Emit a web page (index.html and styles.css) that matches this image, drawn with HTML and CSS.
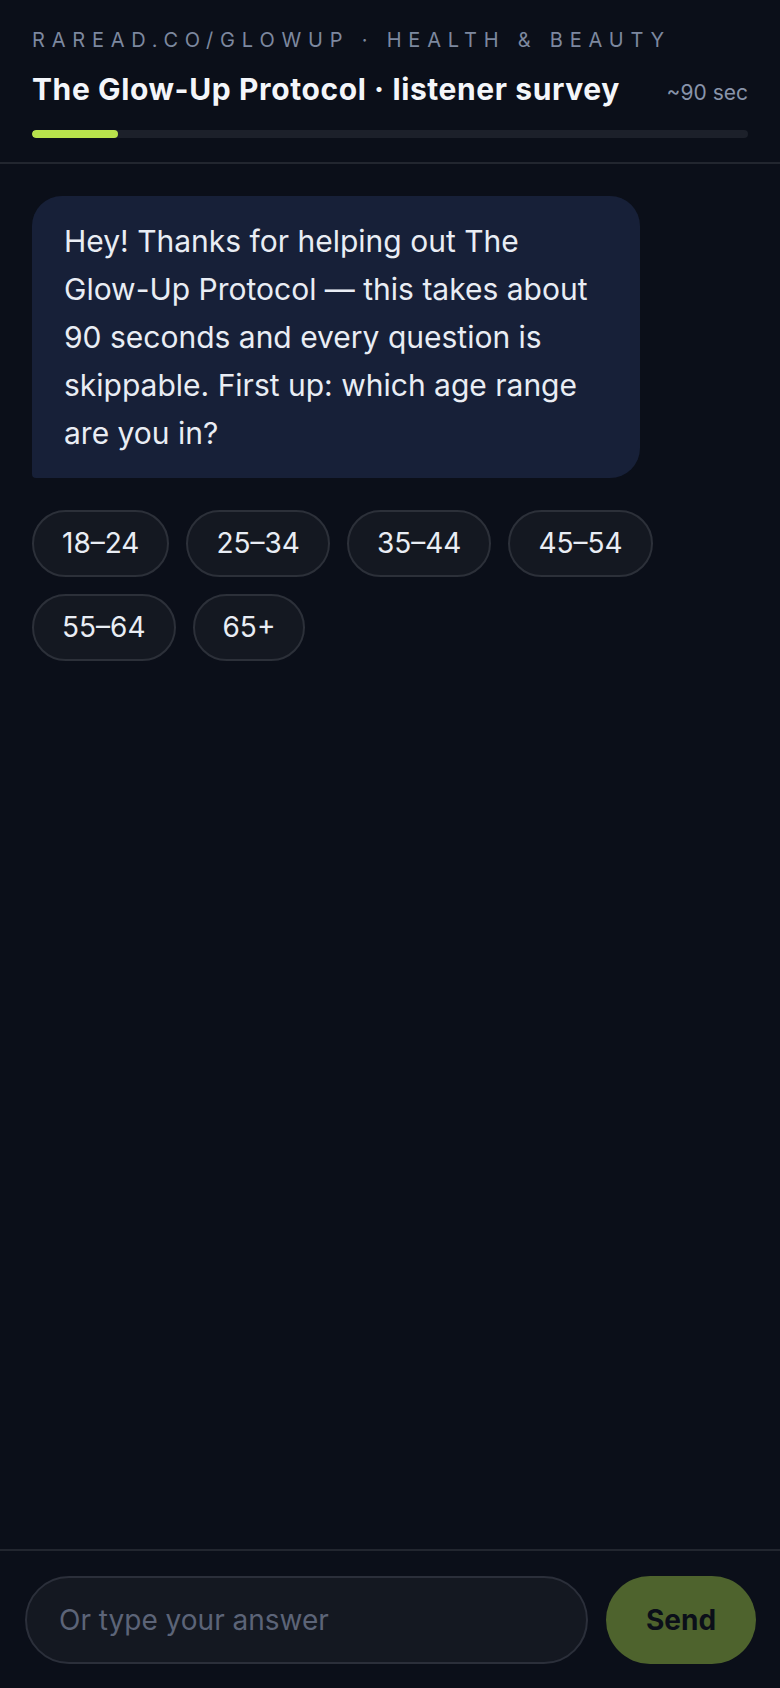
FILE: index.html
```html
<!DOCTYPE html>
<html lang="en">
<head>
    <meta charset="UTF-8">
    <meta name="viewport" content="width=device-width, initial-scale=1.0">
    <title>The Glow-Up Protocol · listener survey</title>
    <link rel="stylesheet" href="styles.css">
</head>
<body>

    <div class="sv-app">
        <header class="sv-header">
            <div class="sv-eyebrow">raread.co/glowup · health &amp; beauty</div>
            <div class="sv-title-row">
                <h1 class="sv-title">The Glow-Up Protocol · listener survey</h1>
                <span class="sv-time">~90 sec</span>
            </div>
            <div class="sv-progress">
                <div class="sv-progress-fill" style="width: 12%"></div>
            </div>
        </header>

        <main class="sv-chat">
            <div class="sv-bubble">
                Hey! Thanks for helping out The Glow-Up Protocol — this takes about 90 seconds and every question is skippable. First up: which age range are you in?
            </div>

            <div class="sv-choices">
                <button class="sv-chip">18–24</button>
                <button class="sv-chip">25–34</button>
                <button class="sv-chip">35–44</button>
                <button class="sv-chip">45–54</button>
                <button class="sv-chip">55–64</button>
                <button class="sv-chip">65+</button>
            </div>
        </main>

        <footer class="sv-composer">
            <input type="text" class="sv-input" placeholder="Or type your answer">
            <button class="sv-send">Send</button>
        </footer>
    </div>

</body>
</html>
```

FILE: styles.css
```css
:root {
    --bg-color: #0b0f19;
    --bubble-color: #172038;
    --chip-color: #141821;
    --line-color: #22262f;
    --text-color: #e9edf4;
    --muted-color: #7d889f;
    --accent-color: #b8e24c;
    --send-color: #4e632d;
}

* {
    box-sizing: border-box;
}

body {
    font-family: Inter, "Noto Sans", sans-serif;
    background-color: var(--bg-color);
    color: var(--text-color);
    margin: 0;
    padding: 0;
}

.sv-app {
    display: flex;
    flex-direction: column;
    height: 100vh;
}

.sv-header {
    padding: 28px 32px 24px;
    border-bottom: 2px solid var(--line-color);
}

.sv-eyebrow {
    font-size: 20px;
    line-height: 24px;
    letter-spacing: 0.34em;
    text-transform: uppercase;
    white-space: nowrap;
    color: var(--muted-color);
}

.sv-title-row {
    display: flex;
    justify-content: space-between;
    align-items: baseline;
    margin-top: 18px;
}

.sv-title {
    margin: 0;
    font-size: 30px;
    line-height: 38px;
    font-weight: 700;
    letter-spacing: 0.6px;
    white-space: nowrap;
    color: #f4f6fa;
}

.sv-time {
    font-size: 21px;
    color: #8894aa;
}

.sv-progress {
    margin-top: 22px;
    height: 8px;
    border-radius: 4px;
    background-color: #1c202a;
    overflow: hidden;
}

.sv-progress-fill {
    height: 100%;
    border-radius: 4px;
    background-color: var(--accent-color);
}

.sv-chat {
    flex: 1;
    padding: 32px;
}

.sv-bubble {
    width: 608px;
    max-width: 85%;
    padding: 21px 32px;
    font-size: 30px;
    line-height: 48px;
    background-color: var(--bubble-color);
    border-radius: 30px 30px 30px 4px;
}

.sv-choices {
    display: flex;
    flex-wrap: wrap;
    gap: 17px;
    margin-top: 32px;
    max-width: 640px;
}

.sv-chip {
    font-family: inherit;
    font-size: 28px;
    line-height: 31px;
    padding: 16px 28px;
    color: var(--text-color);
    background-color: var(--chip-color);
    border: 2px solid #2c3039;
    border-radius: 999px;
    cursor: pointer;
}

.sv-composer {
    display: flex;
    gap: 18px;
    padding: 25px 24px 24px 25px;
    border-top: 2px solid var(--line-color);
}

.sv-input {
    flex: 1;
    height: 88px;
    padding: 0 32px;
    font-family: inherit;
    font-size: 28px;
    color: var(--text-color);
    background-color: var(--chip-color);
    border: 2px solid #2b2f3a;
    border-radius: 999px;
    outline: none;
}

.sv-input::placeholder {
    color: #5c6478;
}

.sv-send {
    width: 150px;
    height: 88px;
    font-family: inherit;
    font-size: 28px;
    font-weight: 700;
    color: #0b0f19;
    background-color: var(--send-color);
    border: none;
    border-radius: 999px;
    cursor: pointer;
}
```
